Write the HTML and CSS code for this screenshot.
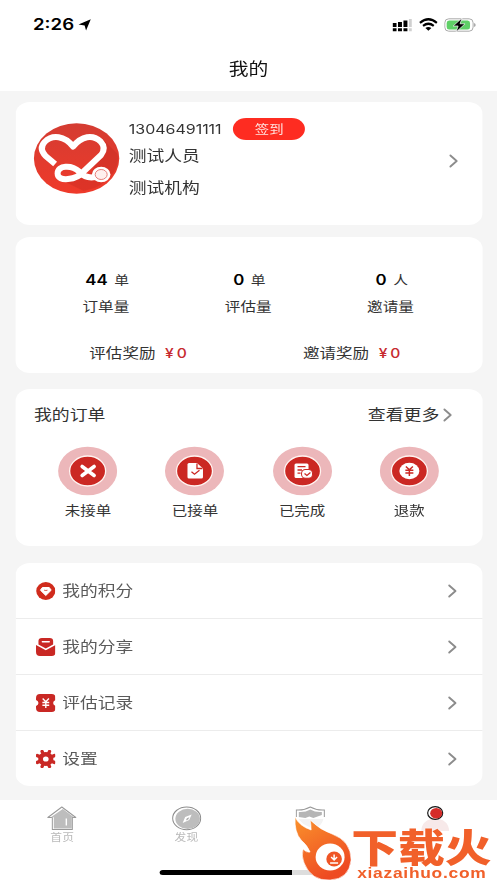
FILE: index.html
```html
<!DOCTYPE html>
<html lang="zh-CN">
<head>
<meta charset="utf-8">
<title>我的</title>
<link rel="stylesheet" href="styles.css">
</head>
<body>
<svg width="0" height="0" class="defs">
  <symbol id="chev" viewBox="0 0 10 14" preserveAspectRatio="none"><path d="M1.5 1.5 8 7 1.5 12.5" fill="none" stroke="#8c8c8c" stroke-width="2" stroke-linecap="round" stroke-linejoin="round"/></symbol>
  <symbol id="disc" viewBox="0 0 60 50" preserveAspectRatio="none"><ellipse cx="30" cy="25" rx="29.5" ry="24.3" fill="#ecb7ba"/><ellipse cx="30" cy="25" rx="18" ry="15" fill="#cb2823" stroke="#fff3f0" stroke-width="1.3"/></symbol>
</svg>
<div class="screen">
  <header class="top">
    <div class="status">
      <div class="clock">2:26
        <svg class="loc" viewBox="0 0 14 12" preserveAspectRatio="none"><path d="M.5 5.600 13.500 .3 8.500 11.500 7 6.500Z" fill="#000"/></svg>
      </div>
      <div class="signals">
        <svg class="cell" viewBox="0 0 20 14" preserveAspectRatio="none"><path d="M0 5h4v4H0zM5.500 4h4v5h-4zM11 2.500h4V9h-4zM0 10.300h4v3H0zM5.500 10.300h4v3h-4zM11 10.300h4v3h-4z"/><path d="M16.500 1h3.500v8h-3.500zM16.500 10.300h3.500v3h-3.500z" fill="#d0d0d0"/></svg>
        <svg class="wifi" viewBox="0 0 20 13" preserveAspectRatio="none"><g fill="none" stroke="#000" stroke-width="2.300"><path d="M1 4.800Q10-2.400 19 4.800"/><path d="M4.300 7.900Q10 3.700 15.700 7.900"/></g><path d="M6.800 10Q10 7.900 13.200 10L10 12.700Z"/></svg>
        <svg class="batt" viewBox="0 0 32 14" preserveAspectRatio="none"><rect x=".6" y=".8" width="28.500" height="12.400" rx="4" fill="#fff" stroke="#aaa"/><rect x="2.500" y="2.500" width="23.500" height="9" rx="2.500" fill="#5fd067"/><path d="M30.200 5v4q1.400-.6 1.400-2t-1.400-2" fill="#999"/><path d="M18 0 9 8h5L12 14l9-8.200h-5z" fill="#000" stroke="#fff" stroke-width=".7"/></svg>
      </div>
    </div>
    <h1>我的</h1>
  </header>

  <section class="card profile">
    <svg class="avatar" viewBox="0 0 86 71" preserveAspectRatio="none">
      <defs><linearGradient id="av" x1="0" y1="0" x2="0" y2="1"><stop offset="0" stop-color="#d43c32"/><stop offset="1" stop-color="#ef3a2a"/></linearGradient></defs>
      <ellipse cx="43" cy="35.500" rx="42.700" ry="35.300" fill="url(#av)"/>
      <path d="M71 18 84 31Q87 52 61 65L50 68 30 58 58 50Z" fill="#b8261d" opacity=".3"/>
      <path d="M21.500 41 12 33Q5 25.500 11 19C19 11 31 13 39.500 23.500C48 13 59 11 67 18.500Q73 25 67.500 32L50 48.500C43 57 24 59.500 24 50.500C24 42 38 41.500 45.500 48.500Q52 56 62 54" fill="none" stroke="#fff" stroke-width="6" stroke-linejoin="round"/>
      <ellipse cx="67.600" cy="51.500" rx="9.300" ry="7.700" fill="#fff"/><ellipse cx="67.600" cy="51.500" rx="6" ry="5" fill="#fff0ee" stroke="#e57d78" stroke-width="1"/>
    </svg>
    <div class="who">
      <div class="phone-row"><span class="phone">13046491111</span><button class="sign">签到</button></div>
      <div class="name">测试人员</div>
      <div class="org">测试机构</div>
    </div>
    <svg class="chev"><use href="#chev"/></svg>
  </section>

  <section class="card numbers">
    <div class="stats">
      <div><p><b>44</b>单</p><span>订单量</span></div>
      <div><p><b>0</b>单</p><span>评估量</span></div>
      <div><p><b>0</b>人</p><span>邀请量</span></div>
    </div>
    <div class="rewards">
      <div>评估奖励<em>¥ 0</em></div>
      <div>邀请奖励<em>¥ 0</em></div>
    </div>
  </section>

  <section class="card orders">
    <div class="orders-head"><span>我的订单</span><span class="more">查看更多<svg class="chev"><use href="#chev"/></svg></span></div>
    <div class="order-list">
      <div><svg viewBox="0 0 60 50" preserveAspectRatio="none"><use href="#disc"/><path d="M24.500 20.500 36.500 29.500M36.500 20.500 24.500 29.500" stroke="#fff" stroke-width="3.600" stroke-linecap="round"/></svg>未接单</div>
      <div><svg viewBox="0 0 60 50" preserveAspectRatio="none"><use href="#disc"/><path d="M24.500 17h8l6 5.500V31q0 1.500-1.500 1.500H24.500Q23 32.500 23 31V18.500Q23 17 24.500 17Z" fill="#fff"/><path d="M32.500 17.500v5h5.500M27 25.700l3 2.500 5-4" fill="none" stroke="#cb2823" stroke-width="1.300"/></svg>已接单</div>
      <div><svg viewBox="0 0 60 50" preserveAspectRatio="none"><use href="#disc"/><rect x="22" y="17.500" width="14" height="14.500" rx="1.500" fill="#fff"/><path d="M25 20.700h8M25 24h4.500M25 27.200h3" stroke="#cb2823" stroke-width="1.300"/><rect x="29" y="23.500" width="11" height="8.800" rx="4" fill="#fff" stroke="#cb2823"/><path d="m32 27.500 2.400 2 3.500-3" fill="none" stroke="#cb2823" stroke-width="1.300"/></svg>已完成</div>
      <div><svg viewBox="0 0 60 50" preserveAspectRatio="none"><use href="#disc"/><ellipse cx="30" cy="25" rx="10" ry="8.200" fill="#fff"/><path d="m26.500 20.500 3.500 3.300 3.500-3.300M30 23.800V30M26 24.300h8M26 27h8" fill="none" stroke="#cb2823" stroke-width="1.500"/></svg>退款</div>
    </div>
  </section>

  <section class="card menu">
    <div class="item"><svg class="ico" viewBox="0 0 20 18" preserveAspectRatio="none"><ellipse cx="10" cy="9" rx="9.800" ry="8.900" fill="#d02b1c"/><path d="M6.500 5.500h7L15.500 8.200 10 13.500 4.500 8.200Z" fill="#fff" stroke="#fff" stroke-linejoin="round"/><path d="M8.300 8.200q1.700.6 3.400 0" fill="none" stroke="#d02b1c" stroke-width=".8"/></svg>我的积分<svg class="chev"><use href="#chev"/></svg></div>
    <div class="item"><svg class="ico" viewBox="0 0 20 18" preserveAspectRatio="none"><path d="M2.500 6.500V3q0-3 3.500-3h8q3.500 0 3.500 3v3.500L10 10.500Z" fill="#c92824"/><path d="M6.500 3.800h7" stroke="#fff" stroke-width="1.500" stroke-linecap="round"/><path d="M0 7 10 12.300 20 7V14q0 4-4 4H4q-4 0-4-4Z" fill="#c92824"/></svg>我的分享<svg class="chev"><use href="#chev"/></svg></div>
    <div class="item"><svg class="ico" viewBox="0 0 20 18" preserveAspectRatio="none"><path d="M4 0h12q4 0 4 4v2q-2.500 1-2.500 3t2.500 3v2q0 4-4 4H4q-4 0-4-4v-2q2.500-1 2.500-3T0 6V4Q0 0 4 0Z" fill="#c92824"/><path d="m6.800 4.500 3.200 3.300 3.200-3.300M10 7.800V14M6.500 8.500h7M6.500 11.200h7" fill="none" stroke="#fff" stroke-width="1.400"/></svg>评估记录<svg class="chev"><use href="#chev"/></svg></div>
    <div class="item"><svg class="ico" viewBox="0 0 20 18" preserveAspectRatio="none"><ellipse cx="10" cy="9" rx="7.800" ry="7" fill="#c92824"/><path d="M6.200 1.500 13.800 16.500M13.800 1.500 6.200 16.500M1.300 5.600 18.700 12.400M18.700 5.600 1.300 12.400" stroke="#c92824" stroke-width="3.400" stroke-linecap="round"/><ellipse cx="10" cy="9" rx="2.900" ry="2.600" fill="#fff"/></svg>设置<svg class="chev"><use href="#chev"/></svg></div>
  </section>

  <nav class="tabs">
    <div><svg viewBox="0 0 30 25" preserveAspectRatio="none"><path d="M15 1 1 11.500h4.500v12h20v-12H29L15 1Z" fill="#fff" stroke="#999" stroke-linejoin="round"/><path d="M16 3 4 11.200h3V22.500h18V11.200h2Z" fill="#bdbdbd"/><path d="M19.500 12.500v7" stroke="#fff" stroke-width="1.400"/></svg>首页</div>
    <div><svg viewBox="0 0 30 25" preserveAspectRatio="none"><ellipse cx="15" cy="12.300" rx="14" ry="11.400" fill="#fff" stroke="#8d8d8d"/><ellipse cx="16" cy="12.800" rx="12.300" ry="10.100" fill="#bdbdbd"/><path d="M11 17 13.500 11 20 8.500 17.500 14Z" fill="#fff"/><path d="m14.200 14.500 1-2.300 2.500-1-1.200 2.300z" fill="#aaa"/></svg>发现</div>
    <div><svg viewBox="0 0 30 25" preserveAspectRatio="none"><path d="M1 11V4Q9 4.500 15 1q6 3.500 14 3v7" fill="#fff" stroke="#999"/><path d="M3.500 11V6Q10 6.500 15 3.500 20 6.500 26.500 6v3L18 12l-4-1.500L10 12Z" fill="#b5b5b5"/><path d="M3 13h25Q27 20 18 23L8 18Z" fill="#f3f3f3"/></svg></div>
    <div><svg viewBox="0 0 30 25" preserveAspectRatio="none"><path d="M1 25Q2 13 15 12.500 28 13 29 25Z" fill="#f7e9e9"/><ellipse cx="15" cy="7" rx="7.500" ry="6.400" fill="#fff" stroke="#181818" stroke-width="1.200"/><ellipse cx="16" cy="7.300" rx="6" ry="5.200" fill="#d52c29"/></svg></div>
  </nav>
  <div class="home-bar"></div>

  <div class="mark">
    <svg class="flame" viewBox="0 0 58 64" preserveAspectRatio="none">
      <defs><linearGradient id="fl" x1="0" y1="0" x2=".5" y2="1"><stop offset="0" stop-color="#fa922c"/><stop offset="1" stop-color="#ee4a22"/></linearGradient></defs>
      <path d="M1 0Q5 9 17 13 17 7 16 3 26 13 38 17 57 24 57 43 55 62 36 63 17 64 10 46 7 39 9 32 12 36 16 35 13 28 7 23 0 15 1 0Z" fill="url(#fl)" stroke="#fff" stroke-width=".6"/>
      <ellipse cx="36" cy="40" rx="14.500" ry="13.500" fill="#fff"/><ellipse cx="40" cy="42" rx="7.800" ry="7.500" fill="#ef5526"/>
      <path d="M40 37.500v5m-3-2.500 3 3 3-3M36 46h8" fill="none" stroke="#fff" stroke-width="1.500"/>
    </svg>
    <div class="mark-text"><strong>下载火</strong><small>xiazaihuo.com</small></div>
  </div>
</div>
</body>
</html>
```
FILE: styles.css
```css
* { box-sizing: border-box; }
html, body { margin: 0; padding: 0; overflow: hidden; }
body { width: 497px; height: 883px; background: #f5f5f5; }
.defs { position: absolute; }
p, h1 { margin: 0; }
svg { display: block; flex: none; }

/* The 414pt-wide layout is stretched to fill the window. */
.screen {
  position: relative;
  display: flex;
  flex-direction: column;
  width: 414px;
  height: 883px;
  transform: scaleX(1.2005);
  transform-origin: 0 0;
  font-family: Inter, "Noto Sans CJK SC", sans-serif;
  color: #333;
}

.top { height: 91px; background: #fff; flex: none; }
.status { display: flex; justify-content: space-between; height: 49px; align-items: center; padding: 0 17.500px 0 27.500px; }
.clock { display: flex; align-items: center; gap: 3px; font-size: 15.500px; font-weight: 600; color: #000; line-height: 20px; }
.loc { width: 11px; height: 12px; }
.signals { display: flex; align-items: center; gap: 5.500px; }
.cell { width: 16.500px; height: 14px; }
.wifi { width: 15.700px; height: 13px; }
.batt { width: 26.500px; height: 14px; }
h1 { text-align: center; font-size: 16.500px; line-height: 24px; font-weight: 400; color: #111; margin-top: 8px; }

.card { margin: 0 12.500px; background: #fff; border-radius: 12px; flex: none; }
.chev { width: 8px; height: 14px; }

.profile { margin-top: 11px; height: 123px; display: flex; padding: 16px 19.500px 0 15.700px; }
.avatar { width: 71.600px; height: 71px; margin-top: 5px; }
.who { margin-left: 7.500px; flex: 1; font-size: 14.800px; line-height: 22px; }
.phone-row { display: flex; height: 22px; gap: 7.500px; }
.phone { width: 79.500px; font-size: 13.300px; white-space: nowrap; }
.sign { border: 0; padding: 0; width: 60px; height: 22px; border-radius: 11px; background: #fe2c21; color: #ffe3df; font: 12px/22px "Noto Sans CJK SC", sans-serif; }
.name { margin-top: 4.500px; }
.org { margin-top: 10.500px; }
.profile .chev { margin-top: 36px; }

.numbers { margin-top: 12px; height: 136px; padding-top: 32px; }
.stats { display: grid; grid-template-columns: repeat(3, 118.500px); margin-left: 16.500px; text-align: center; }
.stats p { font-size: 12.300px; line-height: 22px; padding-left: 2px; }
.stats b { font-size: 14px; font-weight: 600; color: #000; margin-right: 5.500px; }
.stats span { display: block; font-size: 13px; line-height: 20px; margin-top: 3.500px; }
.rewards { display: grid; grid-template-columns: repeat(2, 178px); margin: 27.500px 0 0 13.500px; text-align: center; font-size: 13.750px; line-height: 20px; }
.rewards em { font-style: normal; color: #c72a30; font-size: 13px; font-weight: 500; margin-left: 8px; word-spacing: -1px; }

.orders { margin-top: 16px; height: 157px; padding-top: 15px; }
.orders-head { display: flex; justify-content: space-between; padding: 0 24.500px 0 15.800px; font-size: 14.900px; line-height: 22px; }
.more { display: flex; align-items: center; gap: 3px; }
.order-list { display: grid; grid-template-columns: repeat(4, 89.200px); margin: 21px 0 0 16.200px; text-align: center; font-size: 12.900px; line-height: 20px; }
.order-list svg { width: 50px; height: 50px; margin: -1px auto 5px; }

.menu { margin-top: 17px; height: 223px; }
.item { height: 56px; display: flex; align-items: center; padding: 0 20.500px 0 17px; font-size: 14.800px; line-height: 22px; color: #5a5a5a; border-bottom: 1px solid #ececec; }
.item:last-child { border-bottom: 0; }
.item .ico { width: 16.300px; height: 18px; margin-right: 6px; }
.item .chev { margin-left: auto; }

.tabs { margin-top: 14px; height: 83px; flex: none; background: #fff; display: grid; grid-template-columns: repeat(4, 1fr); text-align: center; padding-top: 6px; font-size: 9.800px; line-height: 14px; color: #bababa; }
.tabs svg { width: 25px; height: 25px; margin: 0 auto; }
.home-bar { position: absolute; left: 133.300px; top: 870px; width: 148px; height: 5px; border-radius: 3px; background: linear-gradient(to right, #000 0 110px, #ddd 110px); }

.mark { position: absolute; left: 245px; top: 817px; width: 166px; height: 66px; display: flex; }
.flame { width: 48.300px; height: 64px; }
.mark-text { display: flex; flex-direction: column; width: 118px; margin-left: -.8px; color: #f1602a; }
.mark-text strong { font: 900 39px/37px "Noto Sans CJK SC", sans-serif; margin-top: 10px; white-space: nowrap; text-shadow: 0 0 2px #fff; }
.mark-text small { font: 700 14.500px/14px "Liberation Sans", sans-serif; letter-spacing: .6px; margin: 2px 0 0 5px; }
```
